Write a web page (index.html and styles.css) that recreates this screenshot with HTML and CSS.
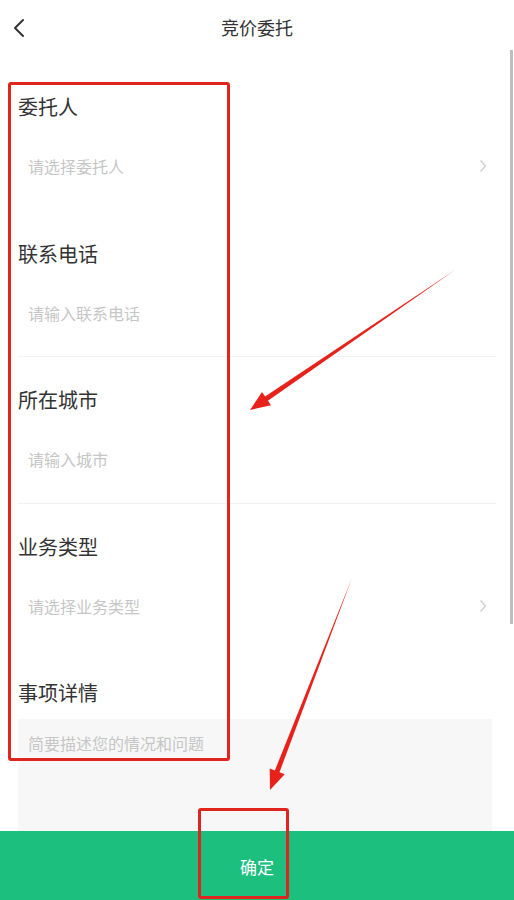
FILE: index.html
```html
<!DOCTYPE html>
<html lang="zh-CN">
<head>
<meta charset="utf-8">
<title>竞价委托</title>
<link rel="stylesheet" href="styles.css">
</head>
<body>
<div class="page">
  <header class="topbar">
    <svg class="back" width="14" height="20" viewBox="0 0 14 20"><path d="M11 2 L3 10 L11 18" fill="none" stroke="#333" stroke-width="2" stroke-linecap="round" stroke-linejoin="round"/></svg>
    <h1 class="title">竞价委托</h1>
  </header>

  <main class="form">
    <section class="field">
      <div class="label">委托人</div>
      <div class="row">
        <span class="ph">请选择委托人</span>
        <svg class="arrow-r" width="8" height="14" viewBox="0 0 8 14"><path d="M1.5 1.5 L6.5 7 L1.5 12.5" fill="none" stroke="#cfcfcf" stroke-width="1.4"/></svg>
      </div>
    </section>
    <section class="field lined">
      <div class="label">联系电话</div>
      <div class="row"><span class="ph">请输入联系电话</span></div>
    </section>
    <section class="field lined">
      <div class="label">所在城市</div>
      <div class="row"><span class="ph">请输入城市</span></div>
    </section>
    <section class="field">
      <div class="label">业务类型</div>
      <div class="row">
        <span class="ph">请选择业务类型</span>
        <svg class="arrow-r" width="8" height="14" viewBox="0 0 8 14"><path d="M1.5 1.5 L6.5 7 L1.5 12.5" fill="none" stroke="#cfcfcf" stroke-width="1.4"/></svg>
      </div>
    </section>
    <section class="field last">
      <div class="label">事项详情</div>
      <div class="textarea"><span class="ph">简要描述您的情况和问题</span></div>
    </section>
  </main>

  <div class="scrollbar"></div>

  <footer class="submit">确定</footer>

  <div class="mark mark-form"></div>
  <div class="mark mark-btn"></div>
  <svg class="arrows" width="514" height="900" viewBox="0 0 514 900">
    <polygon points="455,270 265.1,396.6 262,392.1 250,410 271,405.3 267.9,400.8" fill="#e8221b"/>
    <polygon points="352,578 274.9,770.4 269.7,768.4 270,790 284.7,774.2 279.5,772.2" fill="#e8221b"/>
  </svg>
</div>
</body>
</html>
```

FILE: styles.css
```css
* { box-sizing: border-box; margin: 0; padding: 0; }
html, body { width: 514px; height: 900px; overflow: hidden; background: #fff; }
body {
  font-family: "Noto Sans CJK SC", "Noto Sans", sans-serif;
  color: #333;
}
.page { position: relative; width: 514px; height: 900px; }

.topbar {
  height: 54px;
  display: flex;
  align-items: center;
  justify-content: center;
  position: relative;
}
.back { position: absolute; left: 12px; top: 18px; }
.title { font-size: 18px; font-weight: 400; color: #333; line-height: 24px; }

.form { padding: 10px 18px 0 18px; }
.field {
  height: 146.5px;
  padding-top: 31px;
}
.field.lined { border-bottom: 1px solid #f2f2f2; }
.label { font-size: 20px; line-height: 24px; color: #333; }
.row {
  height: 70px;
  margin-top: 12px;
  display: flex;
  align-items: center;
  justify-content: space-between;
  padding: 0 9px 0 10px;
}
.ph { font-size: 16px; line-height: 22px; color: #c6c6c6; }
.field.last { height: auto; }
.textarea {
  margin-top: 14px;
  width: 474px;
  height: 130px;
  background: #f7f7f7;
  padding: 12px 10px;
}

.scrollbar {
  position: absolute;
  right: 1px;
  top: 50px;
  width: 3px;
  height: 574px;
  background: #bfbfbf;
}

.submit {
  position: absolute;
  left: 0;
  bottom: 0;
  width: 514px;
  height: 69px;
  background: #1dbf7f;
  color: #fff;
  font-size: 17px;
  display: flex;
  align-items: center;
  justify-content: center;
  padding-top: 2px;
}

.mark {
  position: absolute;
  border: 3px solid #e0241e;
  border-radius: 3px;
}
.mark-form { left: 8px; top: 82px; width: 222px; height: 679px; }
.mark-btn { left: 198px; top: 808px; width: 91px; height: 91px; }
.arrows { position: absolute; left: 0; top: 0; pointer-events: none; }
```
